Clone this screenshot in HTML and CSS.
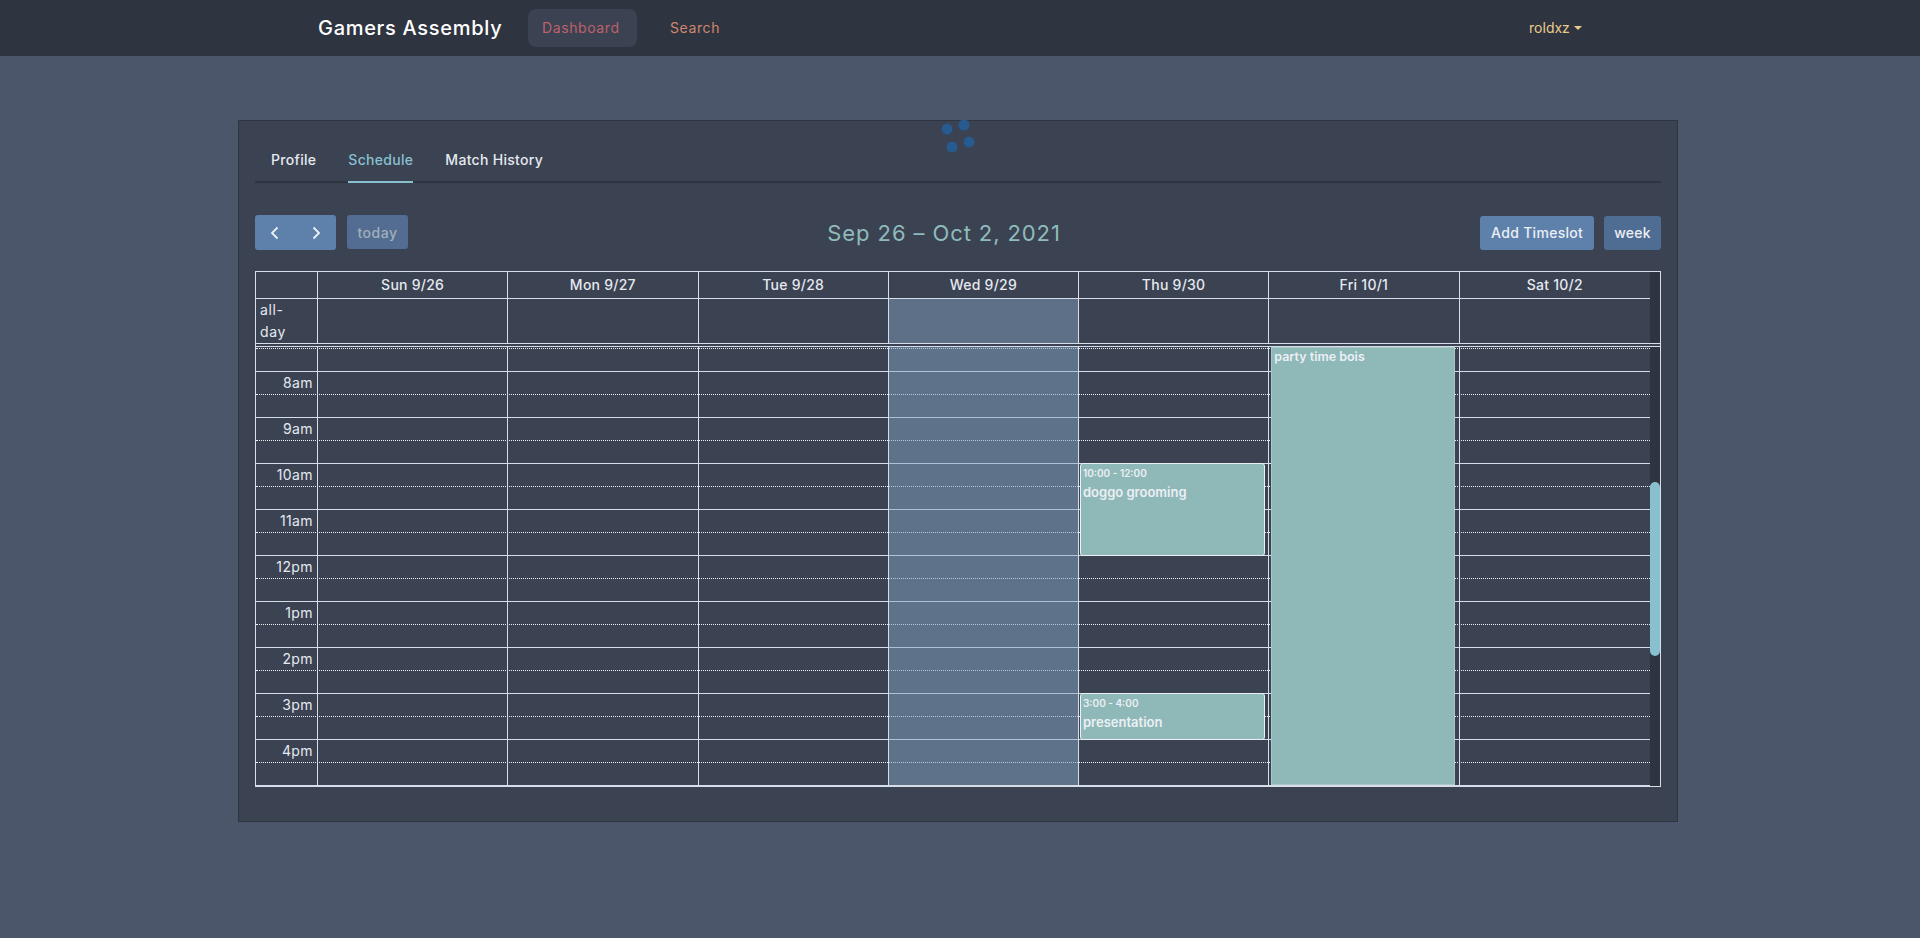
FILE: index.html
```html
<!DOCTYPE html>
<html lang="en">
<head>
    <meta charset="UTF-8">
    <meta name="viewport" content="width=device-width, initial-scale=1.0">
    <title>Gamers Assembly</title>
    <link rel="stylesheet" href="styles.css">
</head>
<body>
    <nav class="navbar">
        <a class="brand">Gamers Assembly</a>
        <a class="nav-link nav-dashboard">Dashboard</a>
        <a class="nav-link nav-search">Search</a>
        <a class="nav-user">roldxz<span class="caret"></span></a>
    </nav>

    <main class="page">
        <section class="card">
            <svg class="spinner" width="50" height="40" viewBox="0 0 50 40">
                <circle cx="8" cy="11" r="5.5"></circle>
                <circle cx="25" cy="7" r="5.5"></circle>
                <circle cx="30" cy="24" r="5.5"></circle>
                <circle cx="13" cy="29" r="5.5"></circle>
            </svg>

            <ul class="tabs">
                <li class="tab">Profile</li>
                <li class="tab tab-active">Schedule</li>
                <li class="tab">Match History</li>
            </ul>

            <div class="toolbar">
                <div class="toolbar-group">
                    <div class="btn-pair">
                        <button class="btn btn-icon">
                            <svg width="12" height="14" viewBox="0 0 12 14"><path d="M8.5 1.5 3 7l5.500 5.500"></path></svg>
                        </button>
                        <button class="btn btn-icon">
                            <svg width="12" height="14" viewBox="0 0 12 14"><path d="M3.500 1.500 9 7l-5.500 5.500"></path></svg>
                        </button>
                    </div>
                    <button class="btn btn-today">today</button>
                </div>
                <h2 class="range">Sep 26 – Oct 2, 2021</h2>
                <div class="toolbar-group">
                    <button class="btn btn-add">Add Timeslot</button>
                    <button class="btn btn-week">week</button>
                </div>
            </div>

            <div class="calendar">
                <div class="cal-section">
                    <div class="cal-main">
                        <div class="cal-row cal-head">
                            <div class="cell-axis"></div>
                            <div class="cell-day">Sun 9/26</div>
                            <div class="cell-day">Mon 9/27</div>
                            <div class="cell-day">Tue 9/28</div>
                            <div class="cell-day">Wed 9/29</div>
                            <div class="cell-day">Thu 9/30</div>
                            <div class="cell-day">Fri 10/1</div>
                            <div class="cell-day">Sat 10/2</div>
                        </div>
                        <div class="cal-row cal-allday">
                            <div class="cell-axis allday-label">all-<br>day</div>
                            <div class="cell-day"></div>
                            <div class="cell-day"></div>
                            <div class="cell-day"></div>
                            <div class="cell-day cell-today"></div>
                            <div class="cell-day"></div>
                            <div class="cell-day"></div>
                            <div class="cell-day"></div>
                        </div>
                    </div>
                    <div class="scrollbar"></div>
                </div>

                <div class="cal-section cal-section-body">
                    <div class="cal-body">
                        <div class="slot half"></div>
                        <div class="slot"><span class="slot-label">8am</span></div>
                        <div class="slot half"></div>
                        <div class="slot"><span class="slot-label">9am</span></div>
                        <div class="slot half"></div>
                        <div class="slot"><span class="slot-label">10am</span></div>
                        <div class="slot half"></div>
                        <div class="slot"><span class="slot-label">11am</span></div>
                        <div class="slot half"></div>
                        <div class="slot"><span class="slot-label">12pm</span></div>
                        <div class="slot half"></div>
                        <div class="slot"><span class="slot-label">1pm</span></div>
                        <div class="slot half"></div>
                        <div class="slot"><span class="slot-label">2pm</span></div>
                        <div class="slot half"></div>
                        <div class="slot"><span class="slot-label">3pm</span></div>
                        <div class="slot half"></div>
                        <div class="slot"><span class="slot-label">4pm</span></div>
                        <div class="slot half"></div>

                        <!-- day columns lie over the slot lines -->
                        <div class="cal-row cal-columns">
                            <div class="cell-axis"></div>
                            <div class="cell-day"></div>
                            <div class="cell-day"></div>
                            <div class="cell-day"></div>
                            <div class="cell-day cell-today"></div>
                            <div class="cell-day">
                                <div class="event event-doggo">
                                    <div class="event-time">10:00 - 12:00</div>
                                    <div class="event-title">doggo grooming</div>
                                </div>
                                <div class="event event-presentation">
                                    <div class="event-time">3:00 - 4:00</div>
                                    <div class="event-title">presentation</div>
                                </div>
                            </div>
                            <div class="cell-day">
                                <div class="event event-party">
                                    <div class="event-title">party time bois</div>
                                </div>
                            </div>
                            <div class="cell-day"></div>
                        </div>
                    </div>
                    <div class="scrollbar"><div class="scrollbar-thumb"></div></div>
                </div>
            </div>
        </section>
    </main>
</body>
</html>
```

FILE: styles.css
```css
* {
    box-sizing: border-box;
}

body {
    margin: 0;
    height: 938px;
    overflow: hidden;
    background-color: #4c566a;
    color: #e5e9f0;
    font-family: Inter, "Open Sans", sans-serif;
}

/* navbar */
.navbar {
    display: flex;
    align-items: center;
    height: 56px;
    padding-left: 318px;
    background-color: #2e3440;
    font-size: 14px;
}

.brand {
    width: 210px;
    margin-bottom: 1px;
    color: #fff;
    font-size: 20px;
    font-weight: 500;
    letter-spacing: 0.7px;
}

.nav-link {
    display: flex;
    align-items: center;
    height: 38px;
    padding: 0 14px 1px;
    border-radius: 8px;
    letter-spacing: 0.6px;
}

.nav-dashboard {
    width: 109px;
    background-color: #3b4252;
    color: #bf616a;
}

.nav-search {
    margin-left: 19px;
    color: #d08770;
}

.nav-user {
    display: flex;
    align-items: center;
    margin-bottom: 1px;
    margin-left: 795px;
    color: #ebcb8b;
}

.caret {
    width: 0;
    height: 0;
    margin-left: 4px;
    border-top: 4px solid #ebcb8b;
    border-left: 4px solid transparent;
    border-right: 4px solid transparent;
}

/* card */
.page {
    padding: 64px 242px 0 238px;
}

.card {
    position: relative;
    height: 702px;
    padding: 0 16px;
    background-color: #3b4252;
    border: 1px solid #2e3440;
}

.spinner {
    position: absolute;
    top: -3px;
    left: 700px;
    fill: #275a8f;
}

/* tabs */
.tabs {
    display: flex;
    gap: 32px;
    height: 62px;
    margin: 0 0 32px;
    padding: 0 0 0 16px;
    list-style: none;
    border-bottom: 2px solid #2e3440;
    font-size: 14px;
    font-weight: 500;
}

.tab {
    height: 62px;
    padding-top: 30px;
    letter-spacing: 0.3px;
}

.tab-active {
    color: #88c0d0;
    border-bottom: 2px solid #88c0d0;
}

/* toolbar */
.toolbar {
    display: flex;
    align-items: center;
    justify-content: space-between;
    height: 35px;
    margin-bottom: 21px;
}

.toolbar-group {
    display: flex;
    gap: 10px;
}

.range {
    margin: 0;
    color: #8fbcbb;
    font-size: 22px;
    font-weight: 400;
    letter-spacing: 0.9px;
}

.btn {
    height: 34px;
    padding: 0 10px;
    background-color: #5e81ac;
    color: #eceff4;
    border: none;
    border-radius: 3px;
    font-family: inherit;
    font-size: 14px;
    font-weight: 500;
    letter-spacing: 0.3px;
}

.btn-pair {
    display: flex;
    margin-right: 1px;
}

.btn-pair .btn:first-child {
    border-radius: 3px 0 0 3px;
}

.btn-pair .btn:last-child {
    border-radius: 0 3px 3px 0;
}

.btn-icon {
    display: flex;
    align-items: center;
    justify-content: center;
    width: 40.5px;
    height: 35px;
    padding: 0;
}

.btn-icon svg {
    fill: none;
    stroke: #eceff4;
    stroke-width: 1.8;
}

.btn-today {
    width: 61px;
    padding: 0;
    background-color: #526d91;
    color: #a3adbb;
    letter-spacing: 0.5px;
}

.btn-add {
    width: 114px;
    padding: 0;
}

.btn-week {
    background-color: #4f6d92;
}

/* calendar */
.calendar {
    display: flex;
    flex-direction: column;
    height: 516px;
    border: 1px solid #d8dee9;
}

.cal-section {
    display: flex;
    border-bottom: 1px solid #d8dee9;
}

.cal-section-body {
    flex: 1;
    min-height: 0;
    margin-top: 2px;
    border-top: 1px solid #d8dee9;
    border-bottom: none;
}

.cal-main {
    flex: 1;
    min-width: 0;
}

.scrollbar {
    position: relative;
    width: 10px;
    background-color: #2e3440;
}

.scrollbar-thumb {
    position: absolute;
    top: 135px;
    left: 0;
    width: 10px;
    height: 174px;
    background-color: #88c0d0;
    border-radius: 5px;
}

.cal-row {
    display: grid;
    grid-template-columns: 61px repeat(6, 190.25px) 1fr;
}

.cell-day {
    position: relative;
    border-left: 1px solid #d8dee9;
}

.cal-head {
    height: 27px;
    border-bottom: 1px solid #d8dee9;
    font-size: 14px;
    font-weight: 500;
    line-height: 25px;
    text-align: center;
    letter-spacing: 0.25px;
}

.cal-allday {
    height: 44px;
}

.allday-label {
    padding: 0 0 0 4px;
    font-size: 14px;
    line-height: 22px;
    letter-spacing: 0.6px;
}

.cell-today {
    background-color: #5e7087;
}

.cal-body {
    position: relative;
    flex: 1;
    min-width: 0;
    padding-top: 1px;
    border-bottom: 1px solid #d8dee9;
    overflow: hidden;
}

.slot {
    height: 23px;
    border-top: 1px solid #d8dee9;
}

.slot.half {
    border-top: 1px dotted #eceff4;
}

.slot-label {
    display: block;
    width: 57px;
    font-size: 14px;
    line-height: 22px;
    text-align: right;
    letter-spacing: 0.4px;
}

.cal-columns {
    position: absolute;
    top: 0;
    left: 0;
    right: 0;
    bottom: 0;
}

.cal-columns .cell-today {
    background-color: rgba(129, 161, 193, 0.5);
}

/* events */
.event {
    position: absolute;
    left: 1px;
    right: 3px;
    padding: 0 2px;
    background-color: #8fb9b8;
    color: #eceff4;
    border: 1px solid #eceff4;
    border-radius: 3px;
}

.event-doggo {
    top: 116px;
    height: 93px;
}

.event-presentation {
    top: 346px;
    height: 47px;
}

.event-party {
    top: 0;
    bottom: 0;
    left: 2px;
    right: 4px;
    border-color: #a9c9c9;
    border-radius: 0;
}

.event-time {
    margin-top: 2px;
    font-size: 10px;
    font-weight: 600;
    line-height: 15px;
}

.event-title {
    margin-top: 4px;
    font-size: 13px;
    font-weight: 600;
    line-height: 15px;
}

.event-party .event-title {
    margin-top: 1px;
    font-size: 12.500px;
}
```
